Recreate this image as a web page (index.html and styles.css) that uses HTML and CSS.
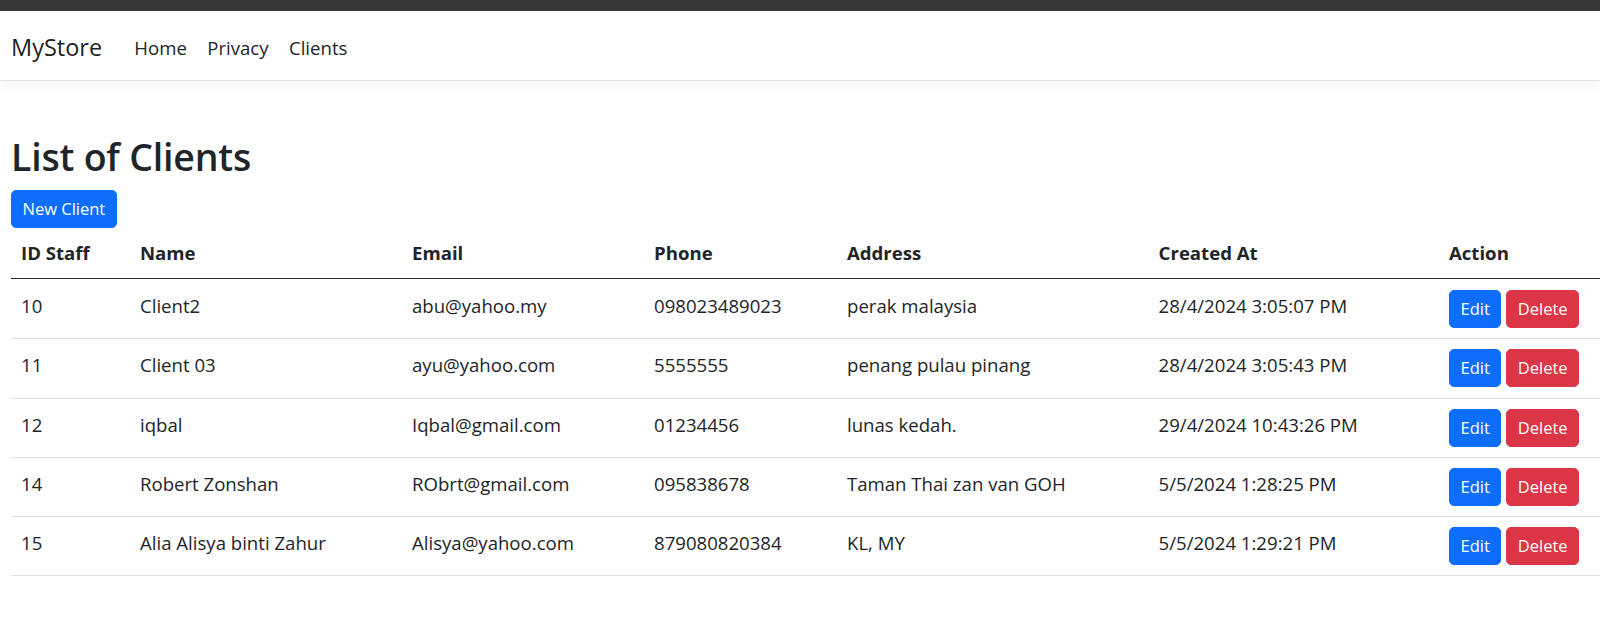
FILE: index.html
```html
<!DOCTYPE html>
<html lang="en">
<head>
<meta charset="utf-8">
<title>MyStore - Clients</title>
<link rel="stylesheet" href="styles.css">
</head>
<body>
<div class="topbar"></div>
<header class="navbar">
  <a class="brand" href="#">MyStore</a>
  <nav class="nav">
    <a class="nav-link" href="#">Home</a>
    <a class="nav-link" href="#">Privacy</a>
    <a class="nav-link" href="#">Clients</a>
  </nav>
</header>
<main class="main">
  <h1 class="title">List of Clients</h1>
  <div class="toolbar"><a class="btn btn-primary" href="#">New Client</a></div>
  <table class="table">
    <colgroup>
      <col class="c-id"><col class="c-name"><col class="c-email"><col class="c-phone"><col class="c-address"><col class="c-created"><col>
    </colgroup>
    <thead>
      <tr><th>ID Staff</th><th>Name</th><th>Email</th><th>Phone</th><th>Address</th><th>Created At</th><th>Action</th></tr>
    </thead>
    <tbody>
      <tr class="first"><td>10</td><td>Client2</td><td>abu@yahoo.my</td><td>098023489023</td><td>perak malaysia</td><td>28/4/2024 3:05:07 PM</td><td class="actions"><a class="btn btn-primary" href="#">Edit</a><a class="btn btn-danger" href="#">Delete</a></td></tr>
      <tr><td>11</td><td>Client 03</td><td>ayu@yahoo.com</td><td>5555555</td><td>penang pulau pinang</td><td>28/4/2024 3:05:43 PM</td><td class="actions"><a class="btn btn-primary" href="#">Edit</a><a class="btn btn-danger" href="#">Delete</a></td></tr>
      <tr><td>12</td><td>iqbal</td><td>Iqbal@gmail.com</td><td>01234456</td><td>lunas kedah.</td><td>29/4/2024 10:43:26 PM</td><td class="actions"><a class="btn btn-primary" href="#">Edit</a><a class="btn btn-danger" href="#">Delete</a></td></tr>
      <tr><td>14</td><td>Robert Zonshan</td><td>RObrt@gmail.com</td><td>095838678</td><td>Taman Thai zan van GOH</td><td>5/5/2024 1:28:25 PM</td><td class="actions"><a class="btn btn-primary" href="#">Edit</a><a class="btn btn-danger" href="#">Delete</a></td></tr>
      <tr><td>15</td><td>Alia Alisya binti Zahur</td><td>Alisya@yahoo.com</td><td>879080820384</td><td>KL, MY</td><td>5/5/2024 1:29:21 PM</td><td class="actions"><a class="btn btn-primary" href="#">Edit</a><a class="btn btn-danger" href="#">Delete</a></td></tr>
    </tbody>
  </table>
</main>
</body>
</html>
```

FILE: styles.css
```css
* { box-sizing: border-box; }
html, body { margin: 0; padding: 0; }
body {
  font-family: "Open Sans", "Noto Sans", sans-serif;
  color: #212529;
  background: #fff;
  overflow: hidden;
}
a { text-decoration: none; }

.topbar {
  height: 11px;
  background: #363636;
}

.navbar {
  height: 70px;
  padding: 4px 0 0 11px;
  display: flex;
  align-items: center;
  background: #fff;
  border-bottom: 1px solid #e3e3e3;
  box-shadow: 0 .25rem .75rem rgba(0, 0, 0, .05);
}
.brand {
  font-size: 23.5px;
  color: rgba(0, 0, 0, .9);
  margin-right: 22px;
  line-height: 1.5;
}
.nav { display: flex; }
.nav-link {
  font-size: 18.6px;
  line-height: 1.5;
  color: #212529;
  padding: 0 10.2px;
}

.main {
  padding: 53px 0 0 11px;
}
.title {
  margin: 0 0 11px;
  font-size: 37.5px;
  font-weight: 600;
  line-height: 45px;
  letter-spacing: -0.2px;
}
.toolbar { display: flex; }

.btn {
  display: inline-block;
  font-size: 16.5px;
  line-height: 24px;
  padding: 6px 10.5px;
  border: 1px solid transparent;
  border-radius: 5px;
  color: #fff;
  white-space: nowrap;
}
.btn-primary { background: #0d6efd; border-color: #0d6efd; }
.btn-danger { background: #dc3545; border-color: #dc3545; }

.table {
  width: 100%;
  table-layout: fixed;
  border-collapse: collapse;
  font-size: 18.6px;
}
.c-id { width: 119px; }
.c-name { width: 272px; }
.c-email { width: 242px; }
.c-phone { width: 193px; }
.c-address { width: 311.6px; }
.c-created { width: 290.4px; }

.table th {
  text-align: left;
  font-weight: 700;
  padding: 12px 8px 12px 10px;
  line-height: 26px;
  border-bottom: 1px solid #212529;
  vertical-align: bottom;
  white-space: nowrap;
}
.table td {
  padding: 7px 8px 13px 10px;
  line-height: 1.5;
  vertical-align: middle;
  border-bottom: 1px solid #dee2e6;
  white-space: nowrap;
}
.table td.actions {
  padding: 10px 8px 10.25px 10px;
}
.table tr.first td { padding-top: 8px; }
.table tr.first td.actions { padding-top: 11px; }
.actions { font-size: 0; }
.actions .btn { font-size: 16.5px; vertical-align: top; }
.actions .btn + .btn { margin-left: 5px; }
```
